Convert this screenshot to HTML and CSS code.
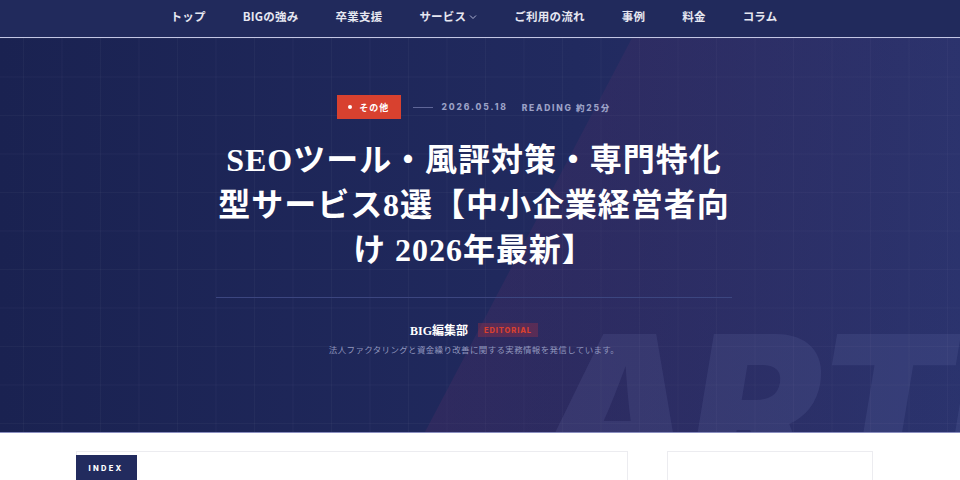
FILE: index.html
```html
<!DOCTYPE html>
<html lang="ja">
<head>
<meta charset="utf-8">
<title>SEOツール・風評対策・専門特化型サービス8選</title>
<link rel="stylesheet" href="styles.css">
</head>
<body>
<header class="nav">
  <ul class="nav-list">
    <li>トップ</li>
    <li>BIGの強み</li>
    <li>卒業支援</li>
    <li class="has-sub">サービス<svg class="chev" width="8" height="6" viewBox="0 0 8 6"><path d="M1 1.5 L4 4.5 L7 1.5" fill="none" stroke="currentColor" stroke-width="1"/></svg></li>
    <li>ご利用の流れ</li>
    <li>事例</li>
    <li>料金</li>
    <li>コラム</li>
  </ul>
</header>
<section class="hero">
  <div class="hero-bg-text" aria-hidden="true">ARTI</div>
  <div class="hero-inner">
    <div class="meta">
      <span class="cat"><span class="dot"></span>その他</span>
      <span class="meta-line"></span>
      <span class="date">2026.05.18</span>
      <span class="reading">READING 約25分</span>
    </div>
    <h1 class="title">SEOツール・風評対策・専門特化<br>型サービス8選【中小企業経営者向<br>け 2026年最新】</h1>
    <div class="author">
      <span class="author-name">BIG編集部</span>
      <span class="author-tag">EDITORIAL</span>
    </div>
    <p class="author-desc">法人ファクタリングと資金繰り改善に関する実務情報を発信しています。</p>
  </div>
</section>
<main class="content">
  <div class="content-inner">
    <div class="toc-card">
      <span class="toc-label">INDEX</span>
    </div>
    <aside class="side-card"></aside>
  </div>
</main>
</body>
</html>
```

FILE: styles.css
```css
* { box-sizing: border-box; }
html, body { margin: 0; padding: 0; }
body {
  font-family: "Noto Sans CJK JP", "Noto Sans", sans-serif;
  background: #ffffff;
  width: 960px;
  height: 480px;
  overflow: hidden;
}

/* NAV */
.nav {
  height: 38px;
  background: #212a5c;
  border-bottom: 1px solid #c3c6e4;
  padding-right: 12px;
}
.nav-list {
  list-style: none;
  margin: 0;
  padding: 0 0 5px;
  height: 37px;
  display: flex;
  justify-content: center;
  align-items: center;
  gap: 37px;
}
.nav-list li {
  color: #e6e7f1;
  font-size: 11.5px;
  font-weight: 700;
  display: flex;
  align-items: center;
  gap: 3px;
  letter-spacing: 0.02em;
}
.chev { color: #aeb2d2; margin-top: 1px; }

/* HERO */
.hero {
  position: relative;
  height: 395px;
  overflow: hidden;
  background-color: #1c2454;
  background-image:
    linear-gradient(rgba(255,255,255,0.03) 1px, transparent 1px),
    linear-gradient(90deg, rgba(255,255,255,0.03) 1px, transparent 1px),
    linear-gradient(90deg, #1a2251 0%, #212a5f 60%, #28326c 100%);
  background-size: 38.5px 38.5px, 38.5px 38.5px, 100% 100%;
  background-position: 0 0, 23px 0, 0 0;
  border-bottom: 1px solid #8a8ebf;
  padding-right: 12px;
}
.hero::before {
  content: "";
  position: absolute;
  inset: 0;
  clip-path: polygon(632px 0, 100% 0, 100% 100%, 425px 100%);
  background: linear-gradient(100deg, rgba(95,45,95,0.55) 0%, rgba(80,45,100,0.35) 40%, rgba(60,60,120,0.12) 100%);
  pointer-events: none;
}
.hero-bg-text {
  position: absolute;
  left: 538px;
  top: 270px;
  font-family: "Inter", "Liberation Sans", sans-serif;
  font-weight: 900;
  font-style: italic;
  font-size: 196px;
  line-height: 1;
  letter-spacing: -0.02em;
  color: rgba(160,170,230,0.1);
  white-space: nowrap;
  pointer-events: none;
}
.hero-inner {
  position: relative;
  width: 516px;
  margin: 0 auto;
  padding-top: 57px;
}

.meta {
  display: flex;
  align-items: center;
  justify-content: center;
  height: 24px;
}
.cat {
  display: inline-flex;
  align-items: center;
  gap: 7px;
  height: 24px;
  padding: 0 12px 0 11px;
  background: #d8412f;
  color: #fff;
  font-size: 9px;
  font-weight: 700;
  letter-spacing: 0.12em;
}
.dot {
  width: 4px;
  height: 4px;
  border-radius: 50%;
  background: #fff;
}
.meta-line {
  width: 20px;
  height: 1px;
  background: #5f6698;
  margin: 0 8px 0 12px;
}
.date, .reading {
  font-family: "Inter", "Noto Sans CJK JP", sans-serif;
  font-size: 8.5px;
  font-weight: 800;
  letter-spacing: 0.22em;
  color: #9ba1c6;
}
.reading { margin-left: 14px; letter-spacing: 0.2em; }

.title {
  margin: 19px -20px 0;
  padding-bottom: 24px;
  font-family: "Liberation Serif", "Noto Sans CJK JP", serif;
  font-weight: 700;
  font-size: 32px;
  line-height: 45px;
  letter-spacing: 0.03em;
  color: #ffffff;
  text-align: center;
  white-space: nowrap;
}
.author {
  border-top: 1px solid #3c4680;
  margin: 0 -0px;
  padding-top: 23px;
  display: flex;
  justify-content: center;
  align-items: center;
  gap: 10px;
}
.title + .author { margin-left: 0; }
.author-name {
  font-family: "Liberation Serif", "Noto Sans CJK JP", serif;
  font-weight: 700;
  font-size: 12px;
  color: #ffffff;
}
.author-tag {
  display: inline-flex;
  align-items: center;
  height: 14px;
  padding: 0 6px;
  background: rgba(200,50,60,0.28);
  color: #d8412f;
  font-family: "Inter", sans-serif;
  font-size: 7.5px;
  font-weight: 800;
  letter-spacing: 0.12em;
}
.author-desc {
  margin: 4px 0 0;
  text-align: center;
  font-size: 8.5px;
  color: #9096bd;
  letter-spacing: 0.04em;
}

/* CONTENT */
.content {
  padding: 18px 12px 0 0;
}
.content-inner {
  width: 797px;
  margin: 0 auto;
  display: flex;
  gap: 39px;
}
.toc-card {
  width: 552px;
  height: 60px;
  border: 1px solid #ececf0;
  border-bottom: none;
}
.toc-label {
  display: inline-flex;
  align-items: center;
  justify-content: center;
  width: 61px;
  height: 27px;
  margin: -1px 0 0 -1px;
  background: #222b5e;
  color: #fff;
  font-family: "Inter", sans-serif;
  font-size: 7.5px;
  font-weight: 800;
  letter-spacing: 0.3em;
}
.side-card {
  width: 206px;
  height: 60px;
  border: 1px solid #ececf0;
  border-bottom: none;
}
```
